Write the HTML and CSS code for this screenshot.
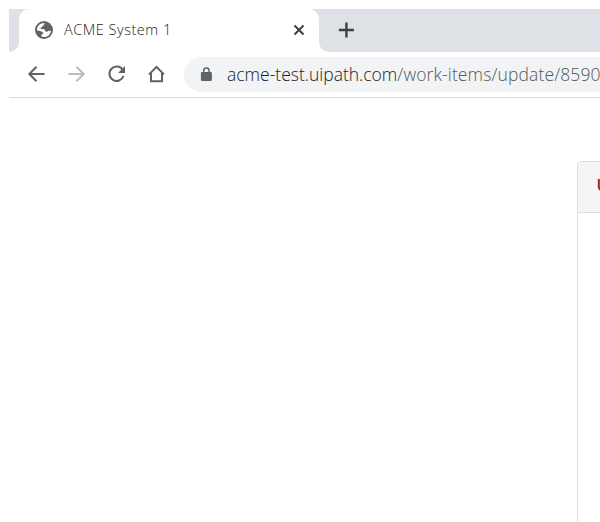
FILE: index.html
```html
<!DOCTYPE html>
<html lang="en">
<head>
<meta charset="utf-8">
<title>ACME System 1</title>
<link rel="stylesheet" href="styles.css">
</head>
<body>
<div class="browser">
  <header class="tabs">
    <div class="strip-start"></div>
    <div class="tab">
      <svg class="globe" viewBox="0 0 18 18"><circle cx="9" cy="9" r="9" fill="#5f6368"/><path d="M9.500 2C9.800 4 8 4.500 7.500 5.200C7 6.500 5.500 6 5.600 7.500C6 8.500 8.500 7.600 9.500 8.500C10.500 9.500 10 10.500 11.200 10.800C12.500 11.100 12.500 9.700 14 9.700L16 9.900C15.500 13.500 12.600 16 9 16C8 16 7.200 15.800 6.500 15.500L6.500 13.500C8.200 13.300 8.500 12.500 8 11.500C7 10.200 5 10 2 9.500C1.800 5 5 2 9.500 2Z" fill="#fff"/></svg>
      <span class="tab-title">ACME System 1</span>
      <svg class="close" viewBox="0 0 12 12"><path d="M1.500 1.500L10.500 10.500M10.500 1.500L1.500 10.500"/></svg>
    </div>
    <div class="strip-rest">
      <svg class="plus" viewBox="0 0 16 16"><path d="M8.400 .5V15.500M.9 8H15.900"/></svg>
    </div>
  </header>
  <nav class="toolbar">
    <svg class="nav-icon" viewBox="-.5 0 24 24"><path d="M20 12H5M12 4.700L4.800 12L12 19.300"/></svg>
    <svg class="nav-icon disabled" viewBox="-.5 0 24 24"><path d="M4 12H19M12 4.700L19.200 12L12 19.300"/></svg>
    <svg class="nav-icon" viewBox="-.5 0 24 24"><path d="M18.200 7.800A7.200 7.200 0 1 0 19 14"/><path class="solid" d="M20.500 4V11H13.500Z"/></svg>
    <svg class="nav-icon" viewBox="-.5 0 24 24"><path d="M4.500 12.400L12 5L19.500 12.400M6.500 11V19.200H17.500V11"/></svg>
    <div class="address">
      <svg class="lock" viewBox="-.4 0 12 14"><path class="shackle" d="M3.300 6V3.600a2.700 2.700 0 0 1 5.400 0V6"/><rect x=".5" y="5" width="11" height="9" rx="1.200"/></svg>
      <span class="url"><span class="host">acme-test.uipath.com</span><span class="path">/work-items/update/8590</span></span>
    </div>
  </nav>
  <main class="page">
    <section class="card"><h1>U</h1></section>
  </main>
</div>
</body>
</html>
```
FILE: styles.css
```css
* { box-sizing: border-box; }
body { margin: 0; background: #fff; font-family: "Open Sans", "Noto Sans", sans-serif; font-weight: 300; overflow: hidden; }
svg { display: block; flex: none; overflow: visible; }
.browser { width: 600px; height: 522px; padding: 9px 0 0 9px; display: flex; flex-direction: column; overflow: hidden; }
.tabs { height: 43px; flex: none; display: flex; background: linear-gradient(#dee1e6, #dee1e6) top / 100% 20px no-repeat; }
.strip-start { width: 10px; background: #dee1e6; border-bottom-right-radius: 10px; }
.tab { width: 300px; height: 43px; flex: none; background: #fff; border-radius: 10px 10px 0 0; display: flex; align-items: center; padding: 0 14px 1px 16px; }
.globe { width: 18px; height: 18px; }
.tab-title { margin: -2px 0 0 11px; font-size: 14.500px; letter-spacing: .52px; color: #202124; white-space: nowrap; flex: 1; }
.close { width: 12px; height: 12px; fill: none; stroke: #3c4043; stroke-width: 2; }
.strip-rest { flex: 1; background: #dee1e6; border-bottom-left-radius: 10px; display: flex; align-items: center; padding: 0 0 1px 19px; }
.plus { width: 16px; height: 16px; fill: none; stroke: #3c4043; stroke-width: 2.400; }
.toolbar { height: 46px; flex: none; display: flex; align-items: center; gap: 16px; padding: 0 0 1px 15px; border-bottom: 1px solid #d9dadc; }
.nav-icon { width: 24px; height: 24px; fill: none; stroke: #5f6368; stroke-width: 2; }
.nav-icon .solid { fill: #5f6368; stroke: none; }
.nav-icon.disabled { stroke: #bbbcbe; }
.address { flex: none; width: 416px; height: 35px; background: #f1f3f4; border-radius: 18px 0 0 18px; display: flex; align-items: center; padding-left: 16px; }
.lock { width: 12px; height: 14px; fill: #5f6368; }
.shackle { fill: none; stroke: #5f6368; stroke-width: 1.500; }
.url { margin-left: 15px; font-size: 17.500px; white-space: nowrap; }
.host { color: #202124; }
.path { color: #55585d; letter-spacing: .12px; }
.page { flex: 1; padding: 63px 0 0 568px; overflow: hidden; }
.card { width: 500px; height: 500px; border: 1px solid #ddd; border-radius: 4px; overflow: hidden; }
.card h1 { margin: 0; height: 51px; background: #f5f5f5; border-bottom: 1px solid #ddd; padding-left: 18.500px; font-size: 16px; font-weight: 600; line-height: 47px; color: #7c2a35; white-space: nowrap; }
```
